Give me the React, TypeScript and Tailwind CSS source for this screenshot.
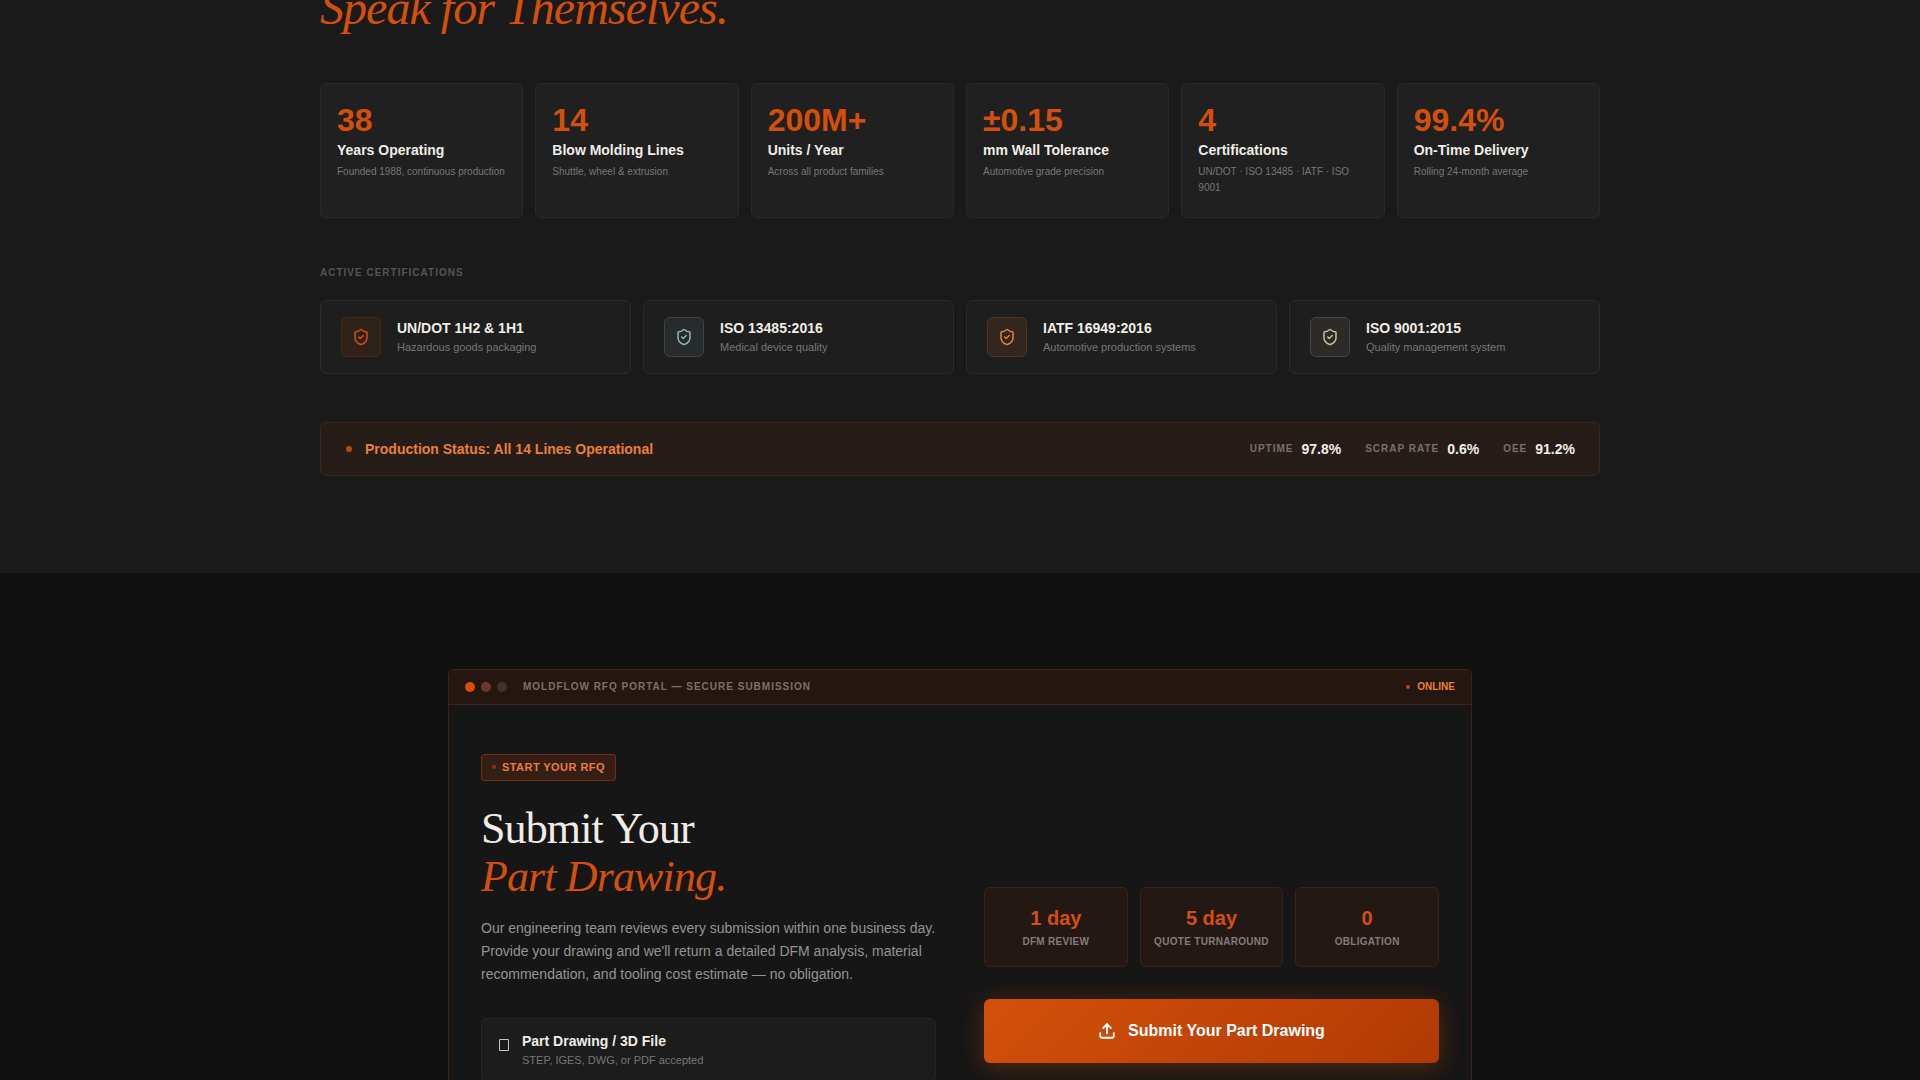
import React, { type FC } from "react"
import { ShieldCheck, Upload } from "lucide-react"

const STATS = [
  { value: "38", label: "Years Operating", note: "Founded 1988, continuous production" },
  { value: "14", label: "Blow Molding Lines", note: "Shuttle, wheel & extrusion" },
  { value: "200M+", label: "Units / Year", note: "Across all product families" },
  { value: "±0.15", label: "mm Wall Tolerance", note: "Automotive grade precision" },
  { value: "4", label: "Certifications", note: "UN/DOT · ISO 13485 · IATF · ISO 9001" },
  { value: "99.4%", label: "On-Time Delivery", note: "Rolling 24-month average" },
]

const CERTS = [
  { name: "UN/DOT 1H2 & 1H1", desc: "Hazardous goods packaging", tone: "border-[#4a2a17] bg-[#2f221b] text-[#d4500a]" },
  { name: "ISO 13485:2016", desc: "Medical device quality", tone: "border-[#3d4645] bg-[#272b2b] text-[#8fb8ad]" },
  { name: "IATF 16949:2016", desc: "Automotive production systems", tone: "border-[#523522] bg-[#32261f] text-[#e8803a]" },
  { name: "ISO 9001:2015", desc: "Quality management system", tone: "border-[#474641] bg-[#2c2b28] text-[#c8bfa0]" },
]

const METRICS = [
  { label: "Uptime", value: "97.8%" },
  { label: "Scrap Rate", value: "0.6%" },
  { label: "OEE", value: "91.2%" },
]

const PROMISES = [
  { value: "1 day", label: "DFM Review" },
  { value: "5 day", label: "Quote Turnaround" },
  { value: "0", label: "Obligation" },
]

const Proof: FC = () => (
  <section className="-mt-[19px] bg-[#1a1a1a] px-6 pb-[97px]">
    <div className="mx-auto max-w-7xl">
      <h2 className="mb-[49px] font-['Liberation_Serif',serif] text-[48px] italic leading-[53px] tracking-[-0.02em] text-[#d4500a]">
        Speak for Themselves.
      </h2>

      <div className="mb-[47px] grid grid-cols-6 gap-3">
        {STATS.map((s) => (
          <div key={s.label} className="rounded-md border border-[#2a2a2a] bg-[#202020] px-4 pt-5 pb-[21px]">
            <p className="mb-1 text-[32px] font-bold leading-8 text-[#d4500a]">{s.value}</p>
            <h3 className="mb-1 text-sm font-bold leading-5 text-[#f0ede8]">{s.label}</h3>
            <p className="text-[10px] leading-4 text-[#777]">{s.note}</p>
          </div>
        ))}
      </div>

      <h3 className="mb-5 text-[10px] font-bold uppercase leading-[15px] tracking-[0.1em] text-[#555]">Active Certifications</h3>
      <ul className="mb-12 grid grid-cols-4 gap-3">
        {CERTS.map((c) => (
          <li key={c.name} className="flex items-center gap-4 rounded-md border border-[#2a2a2a] bg-[#1e1e1e] px-5 py-4">
            <span className={`flex h-10 w-10 flex-none items-center justify-center rounded-md border ${c.tone}`}>
              <ShieldCheck size={18} strokeWidth={2} aria-hidden="true" />
            </span>
            <span className="min-w-0">
              <span className="block text-sm font-bold leading-[21px] text-[#f0ede8]">{c.name}</span>
              <span className="block text-[11px] leading-[17px] text-[#777]">{c.desc}</span>
            </span>
          </li>
        ))}
      </ul>

      <div className="flex items-center justify-between rounded-md border border-[#3d2618] bg-[#261d19] px-6 py-4">
        <p className="flex items-center gap-3 text-sm font-bold leading-5 text-[#e8803a]">
          <span className="flex h-2 w-2 items-center justify-center" aria-hidden="true">
            <span className="h-1.5 w-1.5 rounded-full bg-[#b8480f]" />
          </span>
          Production Status: All 14 Lines Operational
        </p>
        <dl className="flex gap-6">
          {METRICS.map((m) => (
            <div key={m.label} className="flex items-center gap-2">
              <dt className="text-[10px] font-bold uppercase leading-4 tracking-[0.1em] text-[#77716e]">{m.label}</dt>
              <dd className="text-sm font-bold leading-5 text-[#f0ede8]">{m.value}</dd>
            </div>
          ))}
        </dl>
      </div>
    </div>
  </section>
)

const Portal: FC = () => (
  <section className="bg-[#111] px-6 py-24">
    <div className="mx-auto max-w-5xl overflow-hidden rounded-md border border-[#3e2417] bg-[#161616]">
      <div className="flex items-center justify-between border-b border-[#3e2417] bg-[#25160f] px-4 py-[9px]">
        <div className="flex items-center gap-4">
          <div className="flex gap-1.5" aria-hidden="true">
            <span className="h-2.5 w-2.5 rounded-full bg-[#d4500a]" />
            <span className="h-2.5 w-2.5 rounded-full bg-[#6b3a2a]" />
            <span className="h-2.5 w-2.5 rounded-full bg-[#40322c]" />
          </div>
          <p className="text-[10px] font-bold uppercase leading-4 tracking-[0.1em] text-[#7d716b]">
            Moldflow RFQ Portal — Secure Submission
          </p>
        </div>
        <p className="flex items-center gap-1.5 text-[10px] font-bold uppercase leading-4 text-[#e8803a]">
          <span className="flex h-1.5 w-1.5 items-center justify-center" aria-hidden="true">
            <span className="h-1 w-1 rounded-full bg-[#a84a18]" />
          </span>
          Online
        </p>
      </div>

      <div className="grid grid-cols-2 gap-12 px-8 pt-[47px] pb-12">
        <div>
          <p className="mb-6 inline-flex items-center gap-1.5 rounded-[3px] border border-[#6b3010] bg-[#371e14] px-2.5 py-1 text-[11px] font-bold uppercase leading-[17px] tracking-[0.04em] text-[#e8803a]">
            <span className="h-1 w-1 rounded-full bg-[#8a3a14]" aria-hidden="true" />
            Start Your RFQ
          </p>
          <h2 className="mb-4 font-['Liberation_Serif',serif] text-[44px] leading-[48px] tracking-[-0.02em] text-[#f0ede8]">
            Submit Your
            <br />
            <em className="text-[#d4500a]">Part Drawing.</em>
          </h2>
          <p className="mb-8 text-sm leading-[23px] text-[#949494]">
            Our engineering team reviews every submission within one business day. Provide your drawing and we'll return a
            detailed DFM analysis, material recommendation, and tooling cost estimate — no obligation.
          </p>
          <div className="flex items-start gap-3 rounded-md border border-[#262626] bg-[#1c1c1c] px-4 py-3">
            <svg className="mt-2 h-3 w-3 flex-none" viewBox="0 0 12 12" fill="none" stroke="#c4c2be" aria-hidden="true">
              <path d="M1.5.5h9v11h-9z" />
            </svg>
            <div>
              <h3 className="text-sm font-bold leading-[21px] text-[#f0ede8]">Part Drawing / 3D File</h3>
              <p className="text-[11px] leading-[17px] text-[#777]">STEP, IGES, DWG, or PDF accepted</p>
            </div>
          </div>
        </div>

        <div className="flex flex-col gap-8 self-end pb-[19px]">
          <dl className="grid grid-cols-3 gap-3">
            {PROMISES.map((p) => (
              <div key={p.label} className="flex flex-col-reverse gap-0.5 rounded-md border border-[#3d2116] bg-[#241814] px-2 py-4 text-center">
                <dt className="text-[10px] font-bold uppercase leading-4 tracking-[0.03em] text-[#857b77]">{p.label}</dt>
                <dd className="text-xl font-bold leading-7 text-[#d4500a]">{p.value}</dd>
              </div>
            ))}
          </dl>
          <button
            type="button"
            className="flex h-16 w-full items-center justify-center gap-3 rounded-md bg-linear-135 from-[#d4500a] to-[#b03a05] text-base font-bold text-white shadow-[0_4px_24px_rgba(212,80,10,0.35)]"
          >
            <Upload size={18} strokeWidth={2.5} aria-hidden="true" />
            Submit Your Part Drawing
          </button>
        </div>
      </div>
    </div>
  </section>
)

const App: FC = () => (
  <main className="flow-root h-screen overflow-hidden bg-[#111] font-['Liberation_Sans',Arial,sans-serif]">
    <Proof />
    <Portal />
  </main>
)

export default App
